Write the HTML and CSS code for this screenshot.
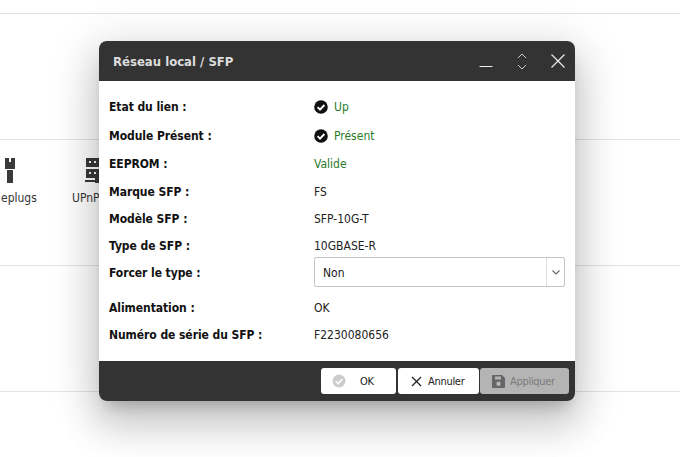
FILE: index.html
```html
<!DOCTYPE html>
<html lang="fr">
<head>
  <meta charset="UTF-8">
  <meta name="viewport" content="width=device-width, initial-scale=1.0">
  <title>Réseau local / SFP</title>
  <link rel="stylesheet" href="styles.css">
</head>
<body>
  <div class="page">
    <div class="band"></div>
    <div class="band band-apps">
      <div class="app app-plugs">
        <svg class="app-icon" width="10" height="25" viewBox="0 0 10 25">
          <path fill="#3a3a3a" d="M0 0h4v4h2V0h4v11H0zM2 12h6v13H2z"/>
        </svg>
        <span class="app-name">eplugs</span>
      </div>
      <div class="app app-upnp">
        <svg class="app-icon" width="20" height="25" viewBox="0 0 20 25">
          <path fill="#3a3a3a" fill-rule="evenodd" d="M1 0h14v9H1zM4 3v2h2V3zM9 3v2h2V3zM1 11h14v9H1zM4 14v2h2v-2zM9 14v2h2v-2z"/>
          <path fill="#3a3a3a" d="M0 22h11v2H0zM10 20h5v5h-5z"/>
        </svg>
        <span class="app-name">UPnP</span>
      </div>
    </div>
    <div class="band"></div>
    <div class="band band-last"></div>
  </div>

  <div class="modal">
    <div class="modal-head">
      <span class="modal-title">Réseau local / SFP</span>
      <div class="win-btns">
        <svg width="16" height="24" viewBox="0 0 16 24"><path d="M1.500 17.500h13" class="win-line"/></svg>
        <svg width="12" height="24" viewBox="0 0 12 24"><path d="M2 9l4-4 4 4M2 16l4 4 4-4" class="win-line win-chevron"/></svg>
        <svg width="16" height="24" viewBox="0 0 16 24"><path d="M1.500 5.500l13 13M14.500 5.500l-13 13" class="win-line"/></svg>
      </div>
    </div>

    <div class="modal-body">
      <div class="row row-status">
        <span class="lbl">Etat du lien :</span>
        <span class="val ok">
          <svg class="check" width="14" height="14" viewBox="0 0 14 14"><circle cx="7" cy="7" r="6.800" fill="#111"/><path d="M3.600 7.200l2.400 2.400 4.400-4.600" fill="none" stroke="#fff" stroke-width="1.900"/></svg>
          Up
        </span>
      </div>
      <div class="row row-status">
        <span class="lbl">Module Présent :</span>
        <span class="val ok">
          <svg class="check" width="14" height="14" viewBox="0 0 14 14"><circle cx="7" cy="7" r="6.800" fill="#111"/><path d="M3.600 7.200l2.400 2.400 4.400-4.600" fill="none" stroke="#fff" stroke-width="1.900"/></svg>
          Présent
        </span>
      </div>
      <div class="row row-eeprom"><span class="lbl">EEPROM :</span><span class="val ok">Valide</span></div>
      <div class="row"><span class="lbl">Marque SFP :</span><span class="val">FS</span></div>
      <div class="row"><span class="lbl">Modèle SFP :</span><span class="val">SFP-10G-T</span></div>
      <div class="row"><span class="lbl">Type de SFP :</span><span class="val">10GBASE-R</span></div>
      <div class="row row-select">
        <span class="lbl">Forcer le type :</span>
        <div class="select">
          <span class="select-text">Non</span>
          <span class="select-arrow">
            <svg width="8" height="5" viewBox="0 0 8 5"><path d="M.5.500L4 4 7.500.500" fill="none" stroke="#666" stroke-width="1.100"/></svg>
          </span>
        </div>
      </div>
      <div class="row"><span class="lbl">Alimentation :</span><span class="val">OK</span></div>
      <div class="row"><span class="lbl">Numéro de série du SFP :</span><span class="val">F2230080656</span></div>
    </div>

    <div class="modal-foot">
      <button class="btn btn-ok">
        <svg width="14" height="14" viewBox="0 0 14 14"><circle cx="7" cy="7" r="6.500" fill="#ccc"/><path d="M3.800 7.200l2.300 2.300 4.200-4.400" fill="none" stroke="#fff" stroke-width="1.600"/></svg>
        <span>OK</span>
      </button>
      <button class="btn btn-cancel">
        <svg width="11" height="11" viewBox="0 0 11 11"><path d="M1 1l9 9M10 1l-9 9" fill="none" stroke="#222" stroke-width="1.300"/></svg>
        <span>Annuler</span>
      </button>
      <button class="btn btn-apply" disabled>
        <svg width="13" height="13" viewBox="0 0 13 13"><path fill="#666" fill-rule="evenodd" d="M1 0h9l3 3v9a1 1 0 0 1-1 1H1a1 1 0 0 1-1-1V1a1 1 0 0 1 1-1zM3 1.500v3h6v-3zM6.500 6.500a2.200 2.200 0 1 0 0 4.400 2.200 2.200 0 0 0 0-4.400z"/></svg>
        <span>Appliquer</span>
      </button>
    </div>
  </div>
</body>
</html>
```

FILE: styles.css
```css
html, body {
  margin: 0;
  height: 100%;
  overflow: hidden;
}
body {
  font-family: "DejaVu Sans Condensed", "Noto Sans", sans-serif;
  font-size: 12px;
  color: #222;
  background: #fff;
}
.page {
  padding-top: 13px;
}
.band {
  height: 125px;
  border-top: 1px solid #e2e2e2;
}
.band-last {
  height: 65px;
}
.band-apps {
  display: flex;
  padding-top: 18px;
  height: 107px;
}
.app {
  display: flex;
  flex-direction: column;
  align-items: flex-start;
  gap: 8px;
}
.app-plugs {
  width: 35px;
  margin-left: 1px;
}
.app-plugs .app-icon {
  margin-left: 4px;
}
.app-upnp {
  margin-left: 36px;
}
.app-upnp .app-icon {
  margin-left: 13px;
}
.app-name {
  color: #333;
}

.modal {
  position: absolute;
  left: 99px;
  top: 41px;
  width: 476px;
  height: 360px;
  display: flex;
  flex-direction: column;
  background: #fff;
  border-radius: 8px;
  overflow: hidden;
  box-shadow: 0 24px 38px 3px rgba(0, 0, 0, 0.14), 0 9px 46px 8px rgba(0, 0, 0, 0.12), 0 11px 15px -7px rgba(0, 0, 0, 0.2);
}
.modal-head {
  height: 40px;
  flex: none;
  display: flex;
  align-items: center;
  justify-content: space-between;
  padding: 0 9px 0 14px;
  background: #333;
}
.modal-title {
  color: #ddd;
  font-size: 13px;
  font-weight: bold;
}
.win-btns {
  display: flex;
  gap: 22px;
}
.win-line {
  fill: none;
  stroke: #eee;
  stroke-width: 1.2;
}
.win-chevron {
  stroke: #ccc;
  stroke-width: 1;
}

.modal-body {
  flex: 1;
  padding: 11px 10px 0;
}
.row {
  display: flex;
  align-items: center;
  height: 27px;
}
.row-status {
  height: 29px;
}
.row-eeprom {
  height: 28px;
}
.row-select {
  height: 30px;
  margin: -2px 0 7px;
}
.lbl {
  width: 205px;
  flex: none;
  font-weight: bold;
  color: #111;
  letter-spacing: -0.06px;
}
.row-select .lbl, .select-text {
  padding-top: 2px;
}
.val {
  display: flex;
  align-items: center;
  gap: 6px;
  color: #222;
}
.ok {
  color: #2a7a2a;
}
.select {
  width: 251px;
  height: 30px;
  box-sizing: border-box;
  display: flex;
  align-items: center;
  border: 1px solid #c4c4c4;
  border-radius: 2px;
}
.select-text {
  flex: 1;
  padding-left: 8px;
}
.select-arrow {
  width: 17px;
  height: 100%;
  display: flex;
  align-items: center;
  justify-content: center;
  border-left: 1px solid #e0e0e0;
}

.modal-foot {
  height: 40px;
  flex: none;
  box-sizing: border-box;
  display: flex;
  justify-content: flex-end;
  gap: 1px;
  padding: 7px 6px 7px 0;
  background: #333;
}
.btn {
  height: 26px;
  display: flex;
  align-items: center;
  padding: 0;
  border: 0;
  border-radius: 3px;
  background: #fff;
  color: #222;
  font: inherit;
  font-size: 11px;
  letter-spacing: -0.3px;
}
.btn-ok {
  width: 75px;
  padding-left: 11px;
  gap: 14px;
  margin-right: 1px;
}
.btn-cancel {
  width: 81px;
  padding-left: 13px;
  gap: 6px;
}
.btn-apply {
  width: 89px;
  padding-left: 12px;
  gap: 5px;
  background: #b4b4b4;
  color: #7a7a7a;
}
```
